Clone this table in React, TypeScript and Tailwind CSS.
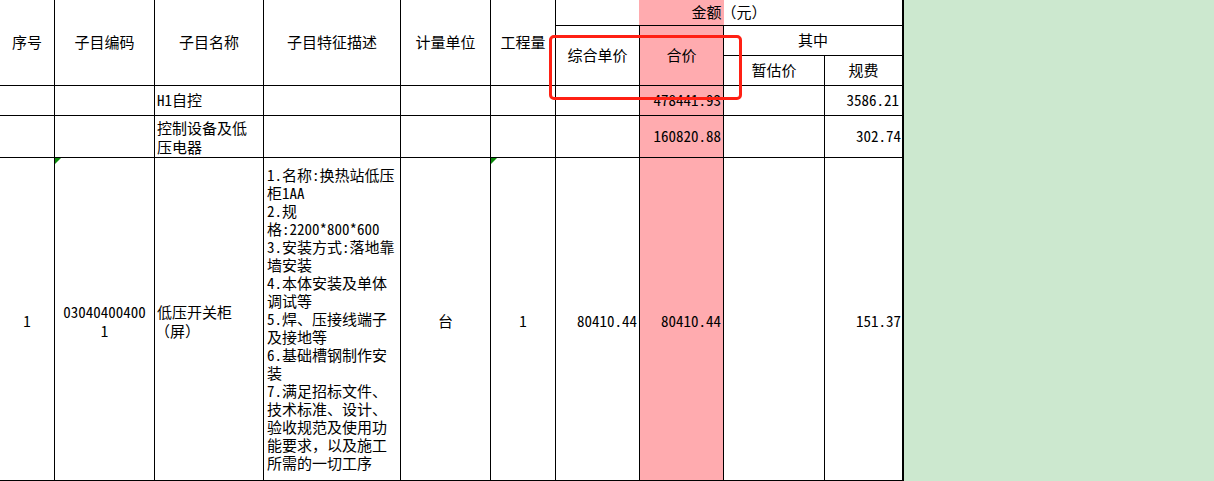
const desc = [
  "1.名称:换热站低压",
  "柜1AA",
  "2.规",
  "格:2200*800*600",
  "3.安装方式:落地靠",
  "墙安装",
  "4.本体安装及单体",
  "调试等",
  "5.焊、压接线端子",
  "及接地等",
  "6.基础槽钢制作安",
  "装",
  "7.满足招标文件、",
  "技术标准、设计、",
  "验收规范及使用功",
  "能要求，以及施工",
  "所需的一切工序",
];

const Cell = ({ className = "", children }: { className?: string; children?: React.ReactNode }) => (
  <div className={`relative flex border-r border-b border-black ${className}`}>{children}</div>
);

const Flag = () => (
  <div className="absolute left-0 top-0 h-0 w-0 border-t-[6px] border-r-[6px] border-t-[#0a8a0a] border-r-transparent" />
);

export default function App() {
  return (
    <div className="flex h-[481px] w-[1214px] bg-[#cce8cf] font-['Noto_Sans_Mono_CJK_SC','Noto_Sans_CJK_SC',monospace] text-[15px] font-light text-black">
      <div className="relative grid h-[481px] w-[904px] shrink-0 grid-cols-[55px_100px_109px_137px_90px_65px_84px_84px_101px_79px] grid-rows-[26px_30px_30px_30px_42px_323px] bg-white">
        {/* header */}
        <Cell className="col-start-1 row-start-1 row-span-3 items-center justify-center">序号</Cell>
        <Cell className="col-start-2 row-start-1 row-span-3 items-center justify-center">子目编码</Cell>
        <Cell className="col-start-3 row-start-1 row-span-3 items-center justify-center">子目名称</Cell>
        <Cell className="col-start-4 row-start-1 row-span-3 items-center justify-center">子目特征描述</Cell>
        <Cell className="col-start-5 row-start-1 row-span-3 items-center justify-center">计量单位</Cell>
        <Cell className="col-start-6 row-start-1 row-span-3 items-center justify-center">工程量</Cell>
        <Cell className="col-start-7 row-start-1 col-span-4 items-center justify-center border-r-2 bg-[linear-gradient(to_right,#fff_83px,#ffabaf_83px,#ffabaf_168px,#fff_168px)]">
          金额（元）
        </Cell>
        <Cell className="col-start-7 row-start-2 row-span-2 items-center justify-center">综合单价</Cell>
        <Cell className="col-start-8 row-start-2 row-span-2 items-center justify-center bg-[#ffabaf]">合价</Cell>
        <Cell className="col-start-9 row-start-2 col-span-2 items-center justify-center border-r-2">其中</Cell>
        <Cell className="col-start-9 row-start-3 items-center justify-center">暂估价</Cell>
        <Cell className="col-start-10 row-start-3 items-center justify-center border-r-2">规费</Cell>

        {/* H1自控 */}
        <Cell className="col-start-1 row-start-4" />
        <Cell className="col-start-2 row-start-4" />
        <Cell className="col-start-3 row-start-4 items-center pl-[2px]">H1自控</Cell>
        <Cell className="col-start-4 row-start-4" />
        <Cell className="col-start-5 row-start-4" />
        <Cell className="col-start-6 row-start-4" />
        <Cell className="col-start-7 row-start-4" />
        <Cell className="col-start-8 row-start-4 items-center justify-end bg-[#ffabaf] pr-[2px]">478441.93</Cell>
        <Cell className="col-start-9 row-start-4" />
        <Cell className="col-start-10 row-start-4 items-center justify-end border-r-2 pr-[3px]">3586.21</Cell>

        {/* 控制设备及低压电器 */}
        <Cell className="col-start-1 row-start-5" />
        <Cell className="col-start-2 row-start-5" />
        <Cell className="col-start-3 row-start-5 flex-col justify-center pl-[2px] leading-[19px]">
          <span>控制设备及低</span>
          <span>压电器</span>
        </Cell>
        <Cell className="col-start-4 row-start-5" />
        <Cell className="col-start-5 row-start-5" />
        <Cell className="col-start-6 row-start-5" />
        <Cell className="col-start-7 row-start-5" />
        <Cell className="col-start-8 row-start-5 items-center justify-end bg-[#ffabaf] pr-[2px]">160820.88</Cell>
        <Cell className="col-start-9 row-start-5" />
        <Cell className="col-start-10 row-start-5 items-center justify-end border-r-2 pr-[1px]">302.74</Cell>

        {/* item 1 */}
        <Cell className="col-start-1 row-start-6 items-center justify-center pt-1">1</Cell>
        <Cell className="col-start-2 row-start-6 flex-col items-center justify-center pt-1 leading-[19px]">
          <Flag />
          <span>03040400400</span>
          <span>1</span>
        </Cell>
        <Cell className="col-start-3 row-start-6 flex-col justify-center pl-[2px] pt-1 leading-[19px]">
          <span>低压开关柜</span>
          <span className="-ml-[2px]">（屏）</span>
        </Cell>
        <Cell className="col-start-4 row-start-6 flex-col justify-center pl-[3px] leading-[18px]">
          {desc.map((l) => (
            <span key={l} className="whitespace-nowrap">
              {l}
            </span>
          ))}
        </Cell>
        <Cell className="col-start-5 row-start-6 items-center justify-center pt-1">台</Cell>
        <Cell className="col-start-6 row-start-6 items-center justify-center pt-1">
          <Flag />
          1
        </Cell>
        <Cell className="col-start-7 row-start-6 items-center justify-end pr-[2px] pt-1">80410.44</Cell>
        <Cell className="col-start-8 row-start-6 items-center justify-end bg-[#ffabaf] pr-[2px] pt-1">80410.44</Cell>
        <Cell className="col-start-9 row-start-6" />
        <Cell className="col-start-10 row-start-6 items-center justify-end border-r-2 pr-[1px] pt-1">151.37</Cell>

        {/* annotation */}
        <div className="pointer-events-none absolute left-[549px] top-[35px] h-[65px] w-[193px] rounded-[5px] border-[3px] border-[#ff2014]" />
      </div>
    </div>
  );
}
